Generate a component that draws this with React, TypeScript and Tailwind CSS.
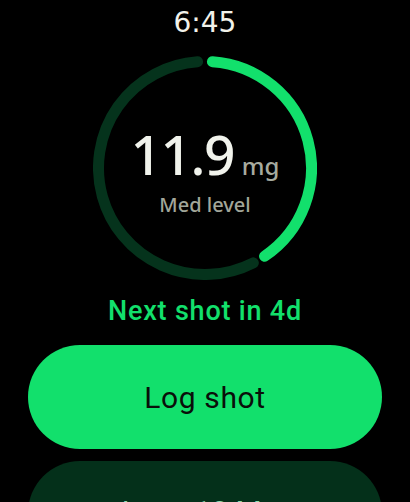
import React from 'react';

const GREEN = '#12e06c';
const TRACK = '#05331c';

const LevelRing: React.FC = () => (
  <svg width="224" height="224" viewBox="0 0 224 224" className="[grid-area:1/1]">
    <path
      d="M 160.35 206.89 A 106.5 106.5 0 1 1 104.57 5.76"
      fill="none"
      stroke={TRACK}
      strokeWidth="11"
      strokeLinecap="round"
    />
    <path
      d="M 119.43 5.76 A 106.5 106.5 0 0 1 171.55 200.29"
      fill="none"
      stroke={GREEN}
      strokeWidth="11"
      strokeLinecap="round"
    />
  </svg>
);

export default function App() {
  return (
    <div className="w-[410px] h-[502px] bg-black overflow-hidden flex flex-col items-center">
      <div className="mt-[6px] text-[28px] leading-[34px] text-[#f2f2ea] font-['DejaVu_Sans',sans-serif]">
        6:45
      </div>

      <div className="mt-[16px] grid place-items-center">
        <LevelRing />
        <div className="[grid-area:1/1] flex flex-col items-center font-['Noto_Sans',sans-serif] pt-[4px]">
          <div className="flex items-baseline">
            <span className="text-[55px] leading-none font-medium tracking-[-1.5px] text-[#f1f3ec]">11.9</span>
            <span className="ml-[8px] text-[24px] leading-none font-medium text-[#a7ab9f]">mg</span>
          </div>
          <div className="mt-[14px] text-[20px] leading-none font-medium text-[#a2a69a]">Med level</div>
        </div>
      </div>

      <div className="mt-[15px] text-[27px] leading-[32px] tracking-[0.8px] text-[#12e06c] font-['Roboto',sans-serif] font-medium">
        Next shot in 4d
      </div>

      <button className="mt-[18px] w-[354px] h-[104px] shrink-0 rounded-full bg-[#12e06c] text-[#0a0f0a] text-[30px] tracking-[0.6px] font-['Roboto',sans-serif]">
        Log shot
      </button>

      <button className="mt-[12px] w-[354px] h-[104px] shrink-0 rounded-full bg-[#04301a] pb-[3px] text-[#8fd9ae] text-[30px] font-['Roboto',sans-serif]">
        Last: 12 Mar
      </button>
    </div>
  );
}
